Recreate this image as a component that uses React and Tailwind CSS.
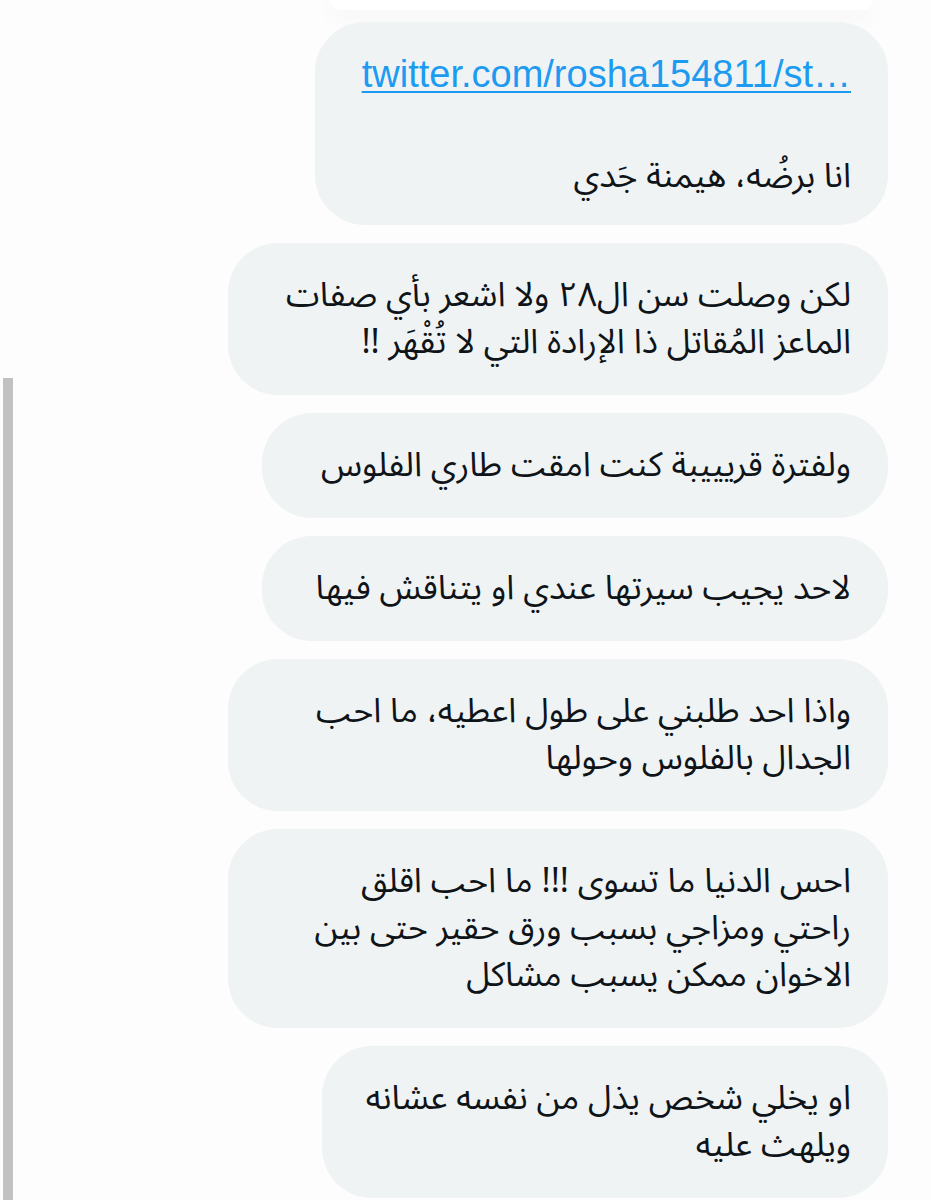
import React from "react";

const messages = [
	{ width: "w-[660px]", lines: ["لكن وصلت سن ال٢٨ ولا اشعر بأي صفات", "الماعز المُقاتل ذا الإرادة التي لا تُقْهَر !!"] },
	{ width: "w-[626px]", lines: ["ولفترة قريييبة كنت امقت طاري الفلوس"] },
	{ width: "w-[626px]", lines: ["لاحد يجيب سيرتها عندي او يتناقش فيها"] },
	{ width: "w-[660px]", lines: ["واذا احد طلبني على طول اعطيه، ما احب", "الجدال بالفلوس وحولها"] },
	{ width: "w-[660px]", lines: ["احس الدنيا ما تسوى !!! ما احب اقلق", "راحتي ومزاجي بسبب ورق حقير حتى بين", "الاخوان ممكن يسبب مشاكل"] },
	{ width: "w-[566px]", lines: ["او يخلي شخص يذل من نفسه عشانه", "ويلهث عليه"] },
];

const arabicFont = { fontFamily: '"Noto Sans Arabic", "DejaVu Sans", "Noto Sans", sans-serif' };

function Bubble({ width, children }) {
	return (
		<div dir="rtl" className={`${width} shrink-0 rounded-[50px] bg-[#eff3f4] pr-[37px] pl-[30px] py-[29px] text-[#0f1419]`}>
			{children}
		</div>
	);
}

export default function App() {
	return (
		<div className="h-[1200px] w-[931px] overflow-hidden bg-[#fdfdfd] flex">
			{/* scroll indicator on the left edge */}
			<div className="w-[16px] shrink-0 pt-[378px] pl-[3px] flex">
				<div className="w-[10px] bg-[#c2c2c2]" />
			</div>

			<div className="flex-1 flex flex-col items-end pr-[43px]">
				{/* bottom of the previous (quoted) card */}
				<div className="w-[543px] h-[10px] mr-[15px] rounded-b-[30px] bg-white shadow-[0_6px_24px_rgba(0,0,0,0.06)]" />

				<div className="mt-[12px] flex flex-col items-end gap-[18px]">
					<div dir="rtl" className="w-[573px] rounded-[50px] bg-[#eff3f4] pr-[37px] pl-[30px] pt-[30px] pb-[25px] text-[#0f1419]">
						<a
							href="#"
							dir="ltr"
							className="block text-right text-[38px] leading-[45px] text-[#1d9bf0] underline decoration-[1.5px] underline-offset-[4px] whitespace-nowrap"
							style={{ fontFamily: '"Liberation Sans", Arial, sans-serif' }}
						>
							twitter.com/rosha154811/st…
						</a>
						<div className="h-[56px]" />
						<p className="text-[34px] leading-[47px] whitespace-nowrap" style={arabicFont}>انا برضُه، هيمنة جَدي</p>
					</div>

					{messages.map((m, i) => (
						<Bubble key={i} width={m.width}>
							{m.lines.map((line, j) => (
								<p key={j} className="text-[34px] leading-[47px] whitespace-nowrap" style={arabicFont}>
									{line}
								</p>
							))}
						</Bubble>
					))}
				</div>
			</div>
		</div>
	);
}
